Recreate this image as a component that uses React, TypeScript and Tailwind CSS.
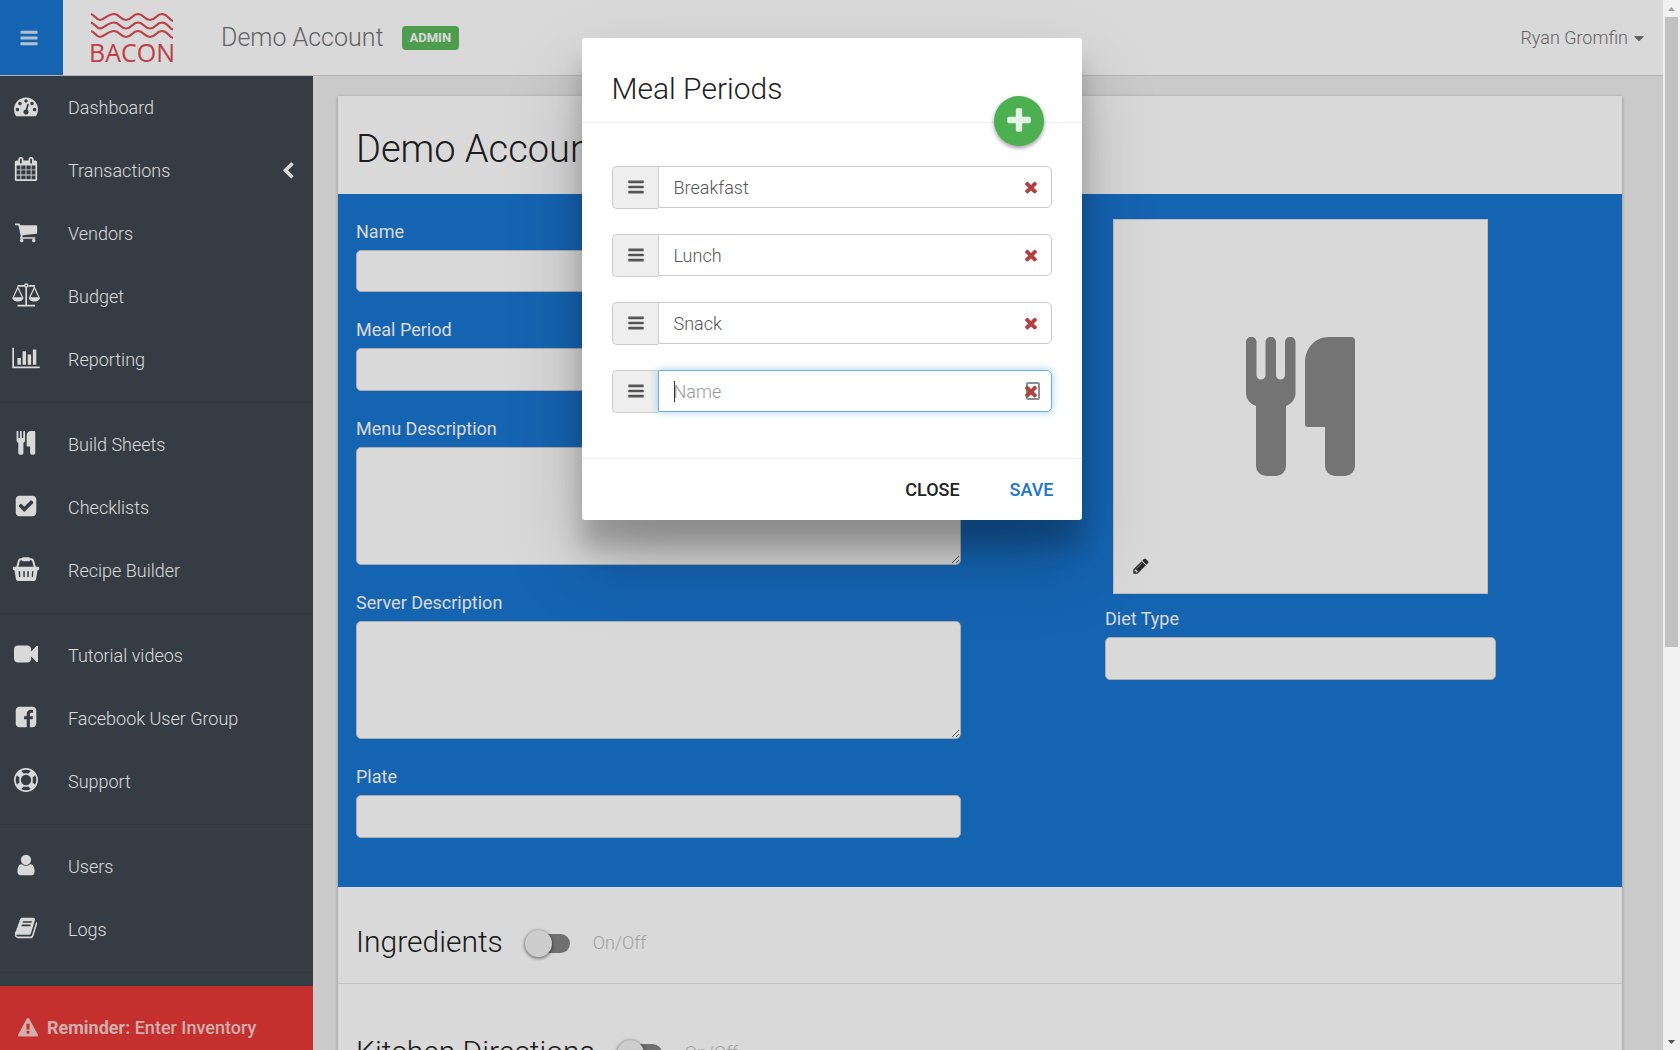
import React, { useState } from "react";
import { FaCaretDown } from "react-icons/fa";

const icons = {
  bars: "M1664 1344v128q0 26-19 45t-45 19h-1408q-26 0-45-19t-19-45v-128q0-26 19-45t45-19h1408q26 0 45 19t19 45zm0-512v128q0 26-19 45t-45 19h-1408q-26 0-45-19t-19-45v-128q0-26 19-45t45-19h1408q26 0 45 19t19 45zm0-512v128q0 26-19 45t-45 19h-1408q-26 0-45-19t-19-45v-128q0-26 19-45t45-19h1408q26 0 45 19t19 45z",
  dashboard: "M384 1152q0-53-37.5-90.5t-90.5-37.5-90.5 37.5-37.5 90.5 37.5 90.5 90.5 37.5 90.5-37.5 37.5-90.5zm192-448q0-53-37.5-90.5t-90.5-37.5-90.5 37.5-37.5 90.5 37.5 90.5 90.5 37.5 90.5-37.5 37.5-90.5zm428 481l101-382q6-26-7.5-48.5t-38.5-29.5-48 6.5-30 39.5l-101 382q-60 5-107 43.5t-63 98.5q-20 77 20 146t117 89 146-20 89-117q16-60-6-117t-72-91zm660-33q0-53-37.5-90.5t-90.5-37.5-90.5 37.5-37.5 90.5 37.5 90.5 90.5 37.5 90.5-37.5 37.5-90.5zm-640-640q0-53-37.5-90.5t-90.5-37.5-90.5 37.5-37.5 90.5 37.5 90.5 90.5 37.5 90.5-37.5 37.5-90.5zm448 192q0-53-37.5-90.5t-90.5-37.5-90.5 37.5-37.5 90.5 37.5 90.5 90.5 37.5 90.5-37.5 37.5-90.5zm320 448q0 261-141 483-19 29-54 29h-1402q-35 0-54-29-141-221-141-483 0-182 71-348t191-286 286-191 348-71 348 71 286 191 191 286 71 348z",
  calendar: "M192 1664h288v-288h-288v288zm352 0h320v-288h-320v288zm-352-352h288v-320h-288v320zm352 0h320v-320h-320v320zm-352-384h288v-288h-288v288zm736 736h320v-288h-320v288zm-384-736h320v-288h-320v288zm768 736h288v-288h-288v288zm-384-352h320v-320h-320v320zm-352-864v-288q0-13-9.5-22.5t-22.5-9.5h-64q-13 0-22.5 9.5t-9.5 22.5v288q0 13 9.5 22.5t22.5 9.5h64q13 0 22.5-9.5t9.5-22.5zm736 864h288v-320h-288v320zm-384-384h320v-288h-320v288zm384 0h288v-288h-288v288zm32-480v-288q0-13-9.5-22.5t-22.5-9.5h-64q-13 0-22.5 9.5t-9.5 22.5v288q0 13 9.5 22.5t22.5 9.5h64q13 0 22.5-9.5t9.5-22.5zm384-64v1280q0 52-38 90t-90 38h-1408q-52 0-90-38t-38-90v-1280q0-52 38-90t90-38h128v-96q0-66 47-113t113-47h64q66 0 113 47t47 113v96h384v-96q0-66 47-113t113-47h64q66 0 113 47t47 113v96h128q52 0 90 38t38 90z",
  cart: "M704 1536q0 52-38 90t-90 38-90-38-38-90 38-90 90-38 90 38 38 90zm896 0q0 52-38 90t-90 38-90-38-38-90 38-90 90-38 90 38 38 90zm128-1088v512q0 24-16.5 42.5t-40.5 21.5l-1044 122q13 60 13 70 0 16-24 64h920q26 0 45 19t19 45-19 45-45 19h-1024q-26 0-45-19t-19-45q0-11 8-31.5t16-36 21.5-40 15.5-29.5l-177-823h-204q-26 0-45-19t-19-45 19-45 45-19h256q16 0 28.5 6.5t19.5 15.5 13 24.5 8 26 5.5 29.5 4.5 26h1201q26 0 45 19t19 45z",
  chart: "M640 896v512h-256v-512h256zm384-512v1024h-256v-1024h256zm1024 1152v128h-2048v-1536h128v1408h1920zm-640-896v768h-256v-768h256zm384-384v1152h-256v-1152h256z",
  check: "M813 1299l614-614q19-19 19-45t-19-45l-102-102q-19-19-45-19t-45 19l-467 467-211-211q-19-19-45-19t-45 19l-102 102q-19 19-19 45t19 45l358 358q19 19 45 19t45-19zm851-883v960q0 119-84.5 203.5t-203.5 84.5h-960q-119 0-203.5-84.5t-84.5-203.5v-960q0-119 84.5-203.5t203.5-84.5h960q119 0 203.5 84.5t84.5 203.5z",
  video: "M1792 352v1088q0 42-39 59-13 5-25 5-27 0-45-19l-403-403v166q0 119-84.5 203.5t-203.5 84.5h-704q-119 0-203.5-84.5t-84.5-203.5v-704q0-119 84.5-203.5t203.5-84.5h704q119 0 203.5 84.5t84.5 203.5v165l403-402q18-19 45-19 12 0 25 5 39 17 39 59z",
  facebook: "M1376 128q119 0 203.5 84.5t84.5 203.5v960q0 119-84.5 203.5t-203.5 84.5h-188v-595h199l30-232h-229v-148q0-56 23.5-84t91.5-28l122-1v-207q-63-9-178-9-136 0-217.5 80t-81.5 226v171h-200v232h200v595h-532q-119 0-203.5-84.5t-84.5-203.5v-960q0-119 84.5-203.5t203.5-84.5h960z",
  support: "M896 0q182 0 348 71t286 191 191 286 71 348-71 348-191 286-286 191-348 71-348-71-286-191-191-286-71-348 71-348 191-286 286-191 348-71zm0 128q-190 0-361 90l194 194q82-28 167-28t167 28l194-194q-171-90-361-90zm-678 1129l194-194q-28-82-28-167t28-167l-194-194q-90 171-90 361t90 361zm678 407q190 0 361-90l-194-194q-82 28-167 28t-167-28l-194 194q171 90 361 90zm0-384q159 0 271.5-112.5t112.5-271.5-112.5-271.5-271.5-112.5-271.5 112.5-112.5 271.5 112.5 271.5 271.5 112.5zm484-217l194 194q90-171 90-361t-90-361l-194 194q28 82 28 167t-28 167z",
  user: "M1536 1399q0 109-62.5 187t-150.5 78h-854q-88 0-150.5-78t-62.5-187q0-85 8.5-160.5t31.5-152 58.5-131 94-89 134.5-34.5q131 128 313 128t313-128q76 0 134.5 34.5t94 89 58.5 131 31.5 152 8.5 160.5zm-256-887q0 159-112.5 271.5t-271.5 112.5-271.5-112.5-112.5-271.5 112.5-271.5 271.5-112.5 271.5 112.5 112.5 271.5z",
  book: "M1703 478q40 57 18 129l-275 906q-19 64-76.5 107.5t-122.5 43.5h-923q-77 0-148.5-53.5t-99.5-131.5q-24-67-2-127 0-4 3-27t4-37q1-8-3-21.5t-3-19.5q2-11 8-21t16.5-23.5 16.5-23.5q23-38 45-91.5t30-91.5q3-10 .5-30t-.5-28q3-11 17-28t17-23q21-36 42-92t25-90q1-9-2.5-32t.5-28q4-13 22-30.5t22-22.5q19-26 42.5-84.5t27.5-96.5q1-8-3-25.5t-2-26.5q2-8 9-18t18-23 17-21q8-12 16.5-30.5t15-35 16-36 19.5-32 26.5-23.5 36-11.5 47.5 5.5l-1 3q38-9 51-9h761q74 0 114 56t18 130l-274 906q-36 119-71.5 153.5t-128.5 34.5h-869q-27 0-38 15-11 16-1 43 24 70 144 70h923q29 0 56-15.5t35-41.5l300-987q7-22 5-57 38 15 59 43zm-1064 2q-4 13 2 22.5t20 9.5h608q13 0 25.5-9.5t16.5-22.5l21-64q4-13-2-22.5t-20-9.5h-608q-13 0-25.5 9.5t-16.5 22.5zm-83 256q-4 13 2 22.5t20 9.5h608q13 0 25.5-9.5t16.5-22.5l21-64q4-13-2-22.5t-20-9.5h-608q-13 0-25.5 9.5t-16.5 22.5z",
  warning: "M1024 1375v-190q0-14-9.5-23.5t-22.5-9.5h-192q-13 0-22.5 9.5t-9.5 23.5v190q0 14 9.5 23.5t22.5 9.5h192q13 0 22.5-9.5t9.5-23.5zm-2-374l18-459q0-12-10-19-13-11-24-11h-220q-11 0-24 11-10 7-10 21l17 457q0 10 10 16.5t24 6.5h185q14 0 23.5-6.5t10.5-16.5zm-14-934l768 1408q35 63-2 126-17 29-46.5 46t-63.5 17h-1536q-34 0-63.5-17t-46.5-46q-37-63-2-126l768-1408q17-31 47-49t65-18 65 18 47 49z",
  times: "M1490 1322q0 40-28 68l-136 136q-28 28-68 28t-68-28l-294-294-294 294q-28 28-68 28t-68-28l-136-136q-28-28-28-68t28-68l294-294-294-294q-28-28-28-68t28-68l136-136q28-28 68-28t68 28l294 294 294-294q28-28 68-28t68 28l136 136q28 28 28 68t-28 68l-294 294 294 294q28 28 28 68z",
  plus: "M1600 736v192q0 40-28 68t-68 28h-416v416q0 40-28 68t-68 28h-192q-40 0-68-28t-28-68v-416h-416q-40 0-68-28t-28-68v-192q0-40 28-68t68-28h416v-416q0-40 28-68t68-28h192q40 0 68 28t28 68v416h416q40 0 68 28t28 68z",
  chevronLeft: "M1427 301l-531 531 531 531q19 19 19 45t-19 45l-166 166q-19 19-45 19t-45-19l-742-742q-19-19-19-45t19-45l742-742q19-19 45-19t45 19l166 166q19 19 19 45t-19 45z",
  pencil: "M491 1536l91-91-235-235-91 91v107h128v128h107zm523-928q0-22-22-22-10 0-17 7l-542 542q-7 7-7 17 0 22 22 22 10 0 17-7l542-542q7-7 7-17zm-54-192l416 416-832 832h-416v-416zm683 96q0 53-37 90l-166 166-416-416 166-165q36-38 90-38 53 0 91 38l235 234q37 39 37 91z",
};

function Icon({ name, className }: { name: keyof typeof icons; className: string }) {
  return (
    <svg viewBox={name === "chart" ? "0 0 2048 1792" : "0 0 1792 1792"} fill="currentColor" className={className} aria-hidden="true">
      <path d={icons[name]} />
    </svg>
  );
}

function Cutlery({ className }: { className: string }) {
  return (
    <svg viewBox="0 0 110 140" fill="currentColor" className={className} aria-hidden="true">
      <path d="M0 5a5 5 0 0 1 10.500 0V38a4.500 4.500 0 0 0 9 0V5a5 5 0 0 1 10.500 0V38a4.500 4.500 0 0 0 9 0V5a5 5 0 0 1 10.500 0V56c0 6-4 11-9.500 13V129a10 10 0 0 1-10 10H20a10 10 0 0 1-10-10V69C4 67 0 62 0 56z" />
      <path d="M59 26C59 11 69 0 83 0h22a4 4 0 0 1 4 4V129a10 10 0 0 1-10 10H89a10 10 0 0 1-10-10V90H62a3 3 0 0 1-3-3z" />
    </svg>
  );
}

function Scale({ className }: { className: string }) {
  return (
    <svg viewBox="0 0 28 24" fill="none" stroke="currentColor" className={className} aria-hidden="true">
      <path d="M5.500 2.800H12M16.500 2.800H23M14.200 4.500V22M5.500 22.700H23" strokeWidth="1.700" />
      <circle cx="14.200" cy="2.600" r="1.600" strokeWidth="1.400" />
      <path d="M1.200 14.500L5.800 4.500L10.600 14.500M17.700 14.500L22.400 4.500L27 14.500" strokeWidth="1.200" />
      <path d="M0.300 14.200H11.500C11.500 17 9 18.500 5.900 18.500S0.300 17 0.300 14.200zM16.800 14.200H28C28 17 25.500 18.500 22.400 18.500S16.800 17 16.800 14.200z" fill="currentColor" stroke="none" />
    </svg>
  );
}

function Basket({ className }: { className: string }) {
  return (
    <svg viewBox="0 0 27 24" className={className} aria-hidden="true">
      <path d="M4.500 11L6.400 3.800Q6.800 2.200 8.500 2.200H18.500Q20.200 2.200 20.600 3.800L22.500 11" fill="none" stroke="currentColor" strokeWidth="2" />
      <rect x="9.500" y="0.200" width="8" height="4" rx="1.200" fill="currentColor" />
      <path fill="currentColor" fillRule="evenodd" d="M1.200 9.800h24.600a1 1 0 0 1 .9 1.200l-.2 1.400a1 1 0 0 1-1 .8H25l-1.500 9a2 2 0 0 1-2 1.800h-16a2 2 0 0 1-2-1.800l-1.500-9h-.5a1 1 0 0 1-1-.8L.3 11a1 1 0 0 1 .9-1.200zM6 14.300l.6 5.700h1.300l-.4-5.700zm4.700 0l.2 5.700h1.400v-5.700zm4.100 0v5.700h1.400l.2-5.700zm4.700 0l-.4 5.700h1.300l.6-5.700z" />
    </svg>
  );
}

function Logo() {
  const wave = "c4 1 5 6 9 6s8-6 14-6 6 6 12 6 6-6 12-6 6 6 12 6 6-6 12-6 7 6 11 7";
  return (
    <a href="#" className="flex w-[84px] flex-col items-center text-[#e14b50]">
      <svg viewBox="0 0 84 28" fill="none" stroke="currentColor" strokeWidth="2.200" className="h-7 w-full" aria-hidden="true">
        {[2, 10.5, 19].map((y) => (
          <path key={y} d={`M1 ${y}${wave}`} />
        ))}
      </svg>
      <span className="font-['Open_Sans',sans-serif] text-[25px] leading-6">BACON</span>
    </a>
  );
}

const menu = [
  [
    { label: "Dashboard", icon: <Icon name="dashboard" className="size-6" /> },
    { label: "Transactions", icon: <Icon name="calendar" className="size-6" />, sub: true },
    { label: "Vendors", icon: <Icon name="cart" className="size-6" /> },
    { label: "Budget", icon: <Scale className="h-6 w-7" /> },
    { label: "Reporting", icon: <Icon name="chart" className="h-6 w-7" /> },
  ],
  [
    { label: "Build Sheets", icon: <Cutlery className="h-6 w-5" /> },
    { label: "Checklists", icon: <Icon name="check" className="size-6" /> },
    { label: "Recipe Builder", icon: <Basket className="h-6 w-7" /> },
  ],
  [
    { label: "Tutorial videos", icon: <Icon name="video" className="size-6" /> },
    { label: "Facebook User Group", icon: <Icon name="facebook" className="size-6" /> },
    { label: "Support", icon: <Icon name="support" className="size-6" /> },
  ],
  [
    { label: "Users", icon: <Icon name="user" className="size-6" /> },
    { label: "Logs", icon: <Icon name="book" className="size-6" /> },
  ],
];

function Header() {
  return (
    <header className="flex h-[76px] shrink-0 items-center border-b border-[#d5d5d5] bg-white">
      <button aria-label="Toggle menu" className="flex h-full w-[63px] items-center bg-[#1976d2] pl-[19px] text-white/80">
        <Icon name="bars" className="size-5" />
      </button>
      <div className="pl-[27px]">
        <Logo />
      </div>
      <span className="pl-[47px] text-[25px] font-light text-[#757575]">Demo Account</span>
      <span className="ml-[18px] rounded bg-[#5cb85c] px-2 text-[13px] leading-6 font-bold text-white">ADMIN</span>
      <button className="mr-[19px] ml-auto flex items-center gap-[6px] text-lg font-light text-[#757575]">
        Ryan Gromfin
        <FaCaretDown className="h-4 w-[10px]" />
      </button>
    </header>
  );
}

function Sidebar() {
  return (
    <aside className="flex w-[313px] shrink-0 flex-col bg-[#40474f] text-white">
      <nav className="min-h-0 flex-1 overflow-hidden">
        {menu.map((group, i) => (
          <ul key={i} className="border-b border-[#3a4148] pt-[10px] pb-[11px] first:pt-0">
            {group.map((item) => (
              <li key={item.label}>
                <a href="#" className="flex h-[63px] items-center text-lg font-light">
                  <span className="flex w-[52px] justify-center pb-1">{item.icon}</span>
                  <span className="ml-4 flex-1">{item.label}</span>
                  {item.sub && <Icon name="chevronLeft" className="mr-4 size-[18px]" />}
                </a>
              </li>
            ))}
          </ul>
        ))}
      </nav>
      <a href="#" className="flex h-16 shrink-0 items-start gap-[9px] bg-[#e53935] pt-7 pl-[18px] text-lg leading-7 font-medium text-white/75">
        <Icon name="warning" className="mt-1 size-5" />
        <span>
          <b>Reminder:</b> Enter Inventory
        </span>
      </a>
    </aside>
  );
}

function Field({ id, label, children }: { id: string; label: string; children: React.ReactNode }) {
  return (
    <div className="mb-[25px]">
      <label htmlFor={id} className="block pt-px pb-[6px] text-lg leading-6 text-white">
        {label}
      </label>
      {children}
    </div>
  );
}

const control = "block w-full rounded-[5px] border border-[#ccc] bg-white px-4 text-[#555]";

function Section({ id, title, className }: { id: string; title: string; className: string }) {
  return (
    <section className={className}>
      <h2 className="text-[30px] leading-10 font-light text-[#212121]">{title}</h2>
      <input
        id={id}
        type="checkbox"
        className="relative mt-0.5 ml-[27px] h-[19px] w-10 appearance-none rounded-full bg-[#848484] before:absolute before:-top-1 before:-left-[5px] before:size-[27px] before:rounded-full before:bg-[#f1f1f1] before:shadow-[0_1px_3px_1px_rgba(0,0,0,0.4)]"
      />
      <label htmlFor={id} className="mt-0.5 ml-[23px] text-lg font-light text-[#bdbdbd]">
        On/Off
      </label>
    </section>
  );
}

function MealPeriodsModal() {
  const [periods, setPeriods] = useState(["Breakfast", "Lunch", "Snack", ""]);

  const rename = (index: number, value: string) => {
    setPeriods(periods.map((p, i) => (i === index ? value : p)));
  };

  return (
    <div
      role="dialog"
      aria-labelledby="modal-title"
      className="h-fit w-[500px] rounded-[3px] bg-white shadow-[0_27px_24px_0_rgba(0,0,0,0.2),0_40px_77px_0_rgba(0,0,0,0.22)]"
    >
      <div className="relative border-b border-[#eee] px-[30px] pt-[31px] pb-[13px]">
        <h2 id="modal-title" className="text-[30px] leading-10 font-light text-[#212121]">
          Meal Periods
        </h2>
        <button
          aria-label="Add meal period"
          onClick={() => setPeriods([...periods, ""])}
          className="absolute right-[38px] -bottom-6 flex size-[50px] items-center justify-center rounded-full bg-[#4caf50] text-white/85 shadow-[0_2px_4px_rgba(0,0,0,0.4)]"
        >
          <Icon name="plus" className="size-[30px]" />
        </button>
      </div>
      <div className="flex flex-col gap-[25px] px-[30px] pt-[43px] pb-[45px]">
        {periods.map((period, i) => (
          <div key={i} className="relative flex h-[43px] items-start">
            <span className="flex h-[43px] w-[46px] items-center justify-center rounded-l-[5px] border border-r-0 border-[#ccc] bg-[#eee] pb-0.5 pl-px text-[#555]">
              <Icon name="bars" className="size-[18px]" />
            </span>
            <input
              aria-label="Meal period name"
              placeholder="Name"
              value={period}
              onChange={(e) => rename(i, e.target.value)}
              className={
                "h-[42px] flex-1 rounded-r-[5px] border px-[15px] text-lg font-light text-[#555] outline-none placeholder:text-[#999] " +
                (period ? "border-[#ccc]" : "border-[#66afe9] shadow-[0_0_8px_rgba(102,175,233,0.6)]")
              }
            />
            {!period && <span className="absolute top-[11px] left-[62px] h-[21px] w-px bg-[#333]" />}
            {!period && <span className="absolute top-3 right-3 h-[18px] w-3.5 rounded-xs border-2 border-[#8a8f8f]" />}
            <button
              aria-label="Remove"
              onClick={() => setPeriods(periods.filter((_, n) => n !== i))}
              className="absolute top-[12px] right-3 text-[#b14040]"
            >
              <Icon name="times" className="size-[18px]" />
            </button>
          </div>
        ))}
      </div>
      <div className="flex justify-end gap-[50px] border-t border-[#eee] px-7 pt-[19px] pb-[18px] text-lg leading-6 font-medium">
        <button className="text-[#212121]">CLOSE</button>
        <button className="text-[#1976d2]">SAVE</button>
      </div>
    </div>
  );
}

function App() {
  return (
    <div className="flex h-screen overflow-hidden font-['Roboto',sans-serif]">
      <div className="relative flex min-w-0 flex-1 flex-col">
        <Header />
        <div className="flex min-h-0 flex-1">
          <Sidebar />
          <main className="min-w-0 flex-1 overflow-hidden bg-[#eee] pt-5 pr-[41px] pl-[25px]">
            <div className="bg-white shadow-[0_1px_4px_rgba(0,0,0,0.3)]">
              <h1 className="px-[18px] pt-[29px] pb-[21px] text-[38px] leading-[48px] font-light text-[#212121]">Demo Account</h1>
              <form className="grid grid-cols-12 bg-[#1976d2] pt-[25px] pb-6">
                <div className="col-span-6 pr-[19px] pl-[18px]">
                  <Field id="name" label="Name">
                    <input id="name" className={control + " h-[42px]"} />
                  </Field>
                  <Field id="period" label="Meal Period">
                    <input id="period" className={control + " h-[43px]"} />
                  </Field>
                  <Field id="menu-description" label="Menu Description">
                    <textarea id="menu-description" className={control + " h-[118px]"} />
                  </Field>
                  <Field id="server-description" label="Server Description">
                    <textarea id="server-description" className={control + " h-[118px]"} />
                  </Field>
                  <Field id="plate" label="Plate">
                    <input id="plate" className={control + " h-[43px]"} />
                  </Field>
                </div>
                <div className="col-span-4 col-start-8 pr-[19px] pl-[18px]">
                  <div className="relative mx-2 mb-3 flex aspect-square items-center justify-center border border-[#ddd] bg-white text-[#898989]">
                    <Cutlery className="h-[140px] w-[110px]" />
                    <button type="button" aria-label="Edit picture" className="absolute bottom-[18px] left-[18px] text-[#333]">
                      <Icon name="pencil" className="size-[18px]" />
                    </button>
                  </div>
                  <Field id="diet" label="Diet Type">
                    <input id="diet" className={control + " h-[43px]"} />
                  </Field>
                </div>
              </form>
              <Section id="ingredients" title="Ingredients" className="flex items-center border-b border-[#e5e5e5] px-[18px] pt-[35px] pb-[21px]" />
              <Section id="directions" title="Kitchen Directions" className="flex items-center px-[18px] pt-12 pb-9" />
            </div>
          </main>
        </div>
        {/* backdrop and dialog */}
        <div className="absolute inset-0 flex justify-center bg-black/15 pt-[38px]">
          <MealPeriodsModal />
        </div>
      </div>
      <div className="flex w-[17px] flex-col items-center bg-[#f1f1f1]" aria-hidden="true">
        <svg viewBox="0 0 17 17" className="size-[17px]">
          <path d="M5 11l3.500-4 3.500 4z" fill="#a3a3a3" />
        </svg>
        <div className="h-3/5 w-[13px] bg-[#c1c1c1]" />
        <svg viewBox="0 0 17 17" className="mt-auto size-[17px]">
          <path d="M5 7l3.500 4 3.500-4z" fill="#505050" />
        </svg>
      </div>
    </div>
  );
}

export default App;
